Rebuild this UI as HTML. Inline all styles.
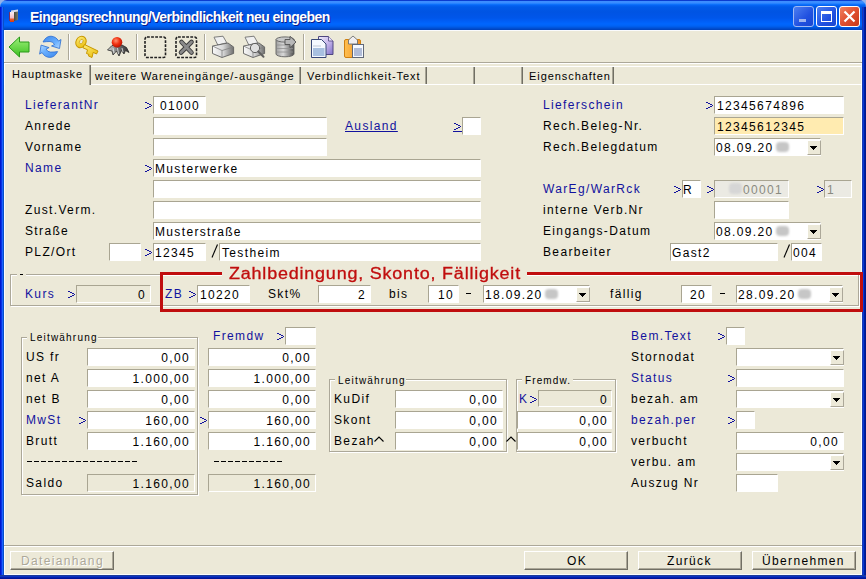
<!DOCTYPE html><html><head><meta charset="utf-8"><style>
*{margin:0;padding:0}
html,body{width:866px;height:579px;overflow:hidden}
body{position:relative;background:#94B2EA;font-family:"Liberation Sans",sans-serif}
.a{position:absolute}
.t{position:absolute;font-size:12px;line-height:14px;letter-spacing:1.35px;white-space:nowrap;color:#000}
.b{color:#12129E}
.u{text-decoration:underline}
.g{color:#8A8A80}
.in{position:absolute;background:#fff;border-top:1px solid #A9A592;border-left:1px solid #A9A592;border-right:1px solid #fff;border-bottom:1px solid #fff;box-sizing:border-box}
.dd{position:absolute;background:#ECE9D8;box-sizing:border-box;border-top:1px solid #fff;border-left:1px solid #fff;border-right:1px solid #ACA899;border-bottom:1px solid #ACA899}
.dd i{position:absolute;left:2px;top:5px;width:0;height:0;border-left:3.5px solid transparent;border-right:3.5px solid transparent;border-top:4px solid #000}
.blur{position:absolute;background:#C6C6C6;border-radius:4px;filter:blur(0.9px)}
.gb{position:absolute;box-sizing:border-box;border:1px solid #ACA899;box-shadow:1px 1px 0 #fff, inset 1px 1px 0 #fff}
.btn{position:absolute;box-sizing:border-box;background:#ECE9D8;border-top:1px solid #fff;border-left:1px solid #fff;border-right:1px solid #716F64;border-bottom:1px solid #716F64;box-shadow:inset -1px -1px 0 #ACA899}
.tab{position:absolute;font-size:11px;line-height:14px;letter-spacing:0.93px;white-space:nowrap;color:#000}
</style></head><body>
<div class="a" style="left:0;top:0;width:866px;height:30px;border-radius:7px 7px 0 0;background:linear-gradient(to bottom,#0A3CD0 0px,#0A3CD0 1px,#3D8EFF 1px,#3A8CFF 3px,#147AFF 4px,#0566F6 5px,#005AE8 7px,#0054E3 12px,#0056EA 18px,#005EF6 21px,#0066FE 24px,#0062F4 26px,#0052D8 28px,#0040B8 30px)"></div>
<div class="a" style="left:0;top:7px;width:4px;height:572px;background:linear-gradient(to right,#0018D0 0px,#0018D0 1px,#0A34E4 1px,#0A34E4 2px,#1A62FF 2px,#1A62FF 3px,#0850C8 3px)"></div>
<div class="a" style="left:862px;top:7px;width:4px;height:572px;background:linear-gradient(to right,#1A3AB0 0px,#1A3AB0 1px,#0838D8 1px,#0838D8 2px,#0020A0 2px,#0020A0 3px,#001890 3px)"></div>
<div class="a" style="left:0;top:575px;width:866px;height:4px;background:linear-gradient(to bottom,#1C3C98 0px,#1C3C98 1px,#0B34C4 1px,#0B34C4 2px,#0420A8 2px,#0420A8 3px,#00149A 3px)"></div>
<div class="a" style="left:4px;top:30px;width:858px;height:545px;background:#ECE9D8;box-sizing:border-box;border:1px solid #FAFBFD"></div>
<div class="a" style="left:9px;top:12px;width:1px;height:9px;background:#7a3060"></div>
<div class="a" style="left:10px;top:12px;width:4px;height:10px;background:linear-gradient(to bottom,#fff0f4,#f4c0c8 55%,#e85828 75%,#d83810)"></div>
<div class="a" style="left:14px;top:11px;width:4px;height:10px;background:linear-gradient(to right,#4a4a3a,#7a7a68);transform:skewY(-14deg);transform-origin:0 0"></div>
<div class="a" style="left:11px;top:10px;width:7px;height:2px;background:#d8dce8;transform:skewY(-10deg)"></div>
<div class="a" style="left:30px;top:9px;font-size:14px;line-height:16px;font-weight:bold;letter-spacing:-0.55px;color:#fff;white-space:nowrap;text-shadow:1px 1px 0 #0a1e8a">Eingangsrechnung/Verbindlichkeit neu eingeben</div>
<div class="a" style="left:793px;top:6px;width:21px;height:21px;box-sizing:border-box;border:1px solid #9fb9f4;border-radius:3px;background:linear-gradient(135deg,#4d7ff0,#2050e0 60%,#1a46d0)"><div class="a" style="left:5px;top:12px;width:7px;height:3px;background:#9eb4ee"></div></div>
<div class="a" style="left:816px;top:6px;width:21px;height:21px;box-sizing:border-box;border:1px solid #fff;border-radius:3px;background:linear-gradient(135deg,#4d7ff0,#2050e0 60%,#1a46d0)"><div class="a" style="left:4px;top:4px;width:11px;height:11px;box-sizing:border-box;border:1px solid #fff;border-top-width:3px"></div></div>
<div class="a" style="left:839px;top:6px;width:21px;height:21px;box-sizing:border-box;border:1px solid #fff;border-radius:3px;background:linear-gradient(135deg,#f08060,#e05030 50%,#c83818)"><svg class="a" style="left:0;top:0" width="19" height="19"><path d="M4.5 4.5L14.5 14.5M14.5 4.5L4.5 14.5" stroke="#fff" stroke-width="2.2"/></svg></div>
<svg class="a" style="left:0;top:0" width="400" height="62">
<defs>
<linearGradient id="gg" x1="0" y1="0" x2="0" y2="1"><stop offset="0" stop-color="#9ef07a"/><stop offset="1" stop-color="#3cc020"/></linearGradient>
<linearGradient id="bg1" x1="0" y1="0" x2="1" y2="1"><stop offset="0" stop-color="#2f7fe8"/><stop offset="1" stop-color="#a8d4ff"/></linearGradient>
<linearGradient id="yg" x1="0" y1="0" x2="1" y2="1"><stop offset="0" stop-color="#fff080"/><stop offset="1" stop-color="#e8b800"/></linearGradient>
<radialGradient id="rg" cx="0.4" cy="0.35" r="0.7"><stop offset="0" stop-color="#ff9070"/><stop offset="0.5" stop-color="#f03010"/><stop offset="1" stop-color="#b01000"/></radialGradient>
<linearGradient id="pg" x1="0" y1="0" x2="1" y2="0"><stop offset="0" stop-color="#f8f8f8"/><stop offset="0.5" stop-color="#d8d8d8"/><stop offset="1" stop-color="#707070"/></linearGradient>
<linearGradient id="dbg" x1="0" y1="0" x2="1" y2="0"><stop offset="0" stop-color="#a0a0a0"/><stop offset="0.4" stop-color="#d8d8d8"/><stop offset="1" stop-color="#505050"/></linearGradient>
<linearGradient id="og" x1="0" y1="0" x2="1" y2="0"><stop offset="0" stop-color="#ffc050"/><stop offset="1" stop-color="#f09020"/></linearGradient>
</defs>
<!-- green back arrow -->
<path d="M9 47 L19.5 37 L19.5 42 L29 42 L29 52 L19.5 52 L19.5 57 Z" fill="url(#gg)" stroke="#2a9a1a" stroke-width="1"/>
<!-- refresh -->
<linearGradient id="rf1" x1="0" y1="0" x2="1" y2="1"><stop offset="0" stop-color="#3A86EC"/><stop offset="0.6" stop-color="#6AB0FF"/><stop offset="1" stop-color="#B8DCFF"/></linearGradient>
<linearGradient id="rf2" x1="1" y1="1" x2="0" y2="0"><stop offset="0" stop-color="#3A86EC"/><stop offset="0.6" stop-color="#6AB0FF"/><stop offset="1" stop-color="#B8DCFF"/></linearGradient>
<path d="M43 42 Q46 36 51 36.2 Q56 36.5 58.5 41 L61 39.5 L59.5 48.5 L51.5 46 L54.5 44.5 Q53 41.5 50 41.5 Q46.5 41.5 43 42 Z" fill="url(#rf1)" stroke="#2A6CD0" stroke-width="0.8" stroke-linejoin="round"/>
<path d="M57.6 51.6 Q54.6 57.6 49.6 57.4 Q44.6 57.1 42.1 52.6 L39.6 54.1 L41.1 45.1 L49.1 47.6 L46.1 49.1 Q47.6 52.1 50.6 52.1 Q54.1 52.1 57.6 51.6 Z" fill="url(#rf2)" stroke="#2A6CD0" stroke-width="0.8" stroke-linejoin="round"/>
<!-- separator -->
<rect x="68" y="34" width="1" height="26" fill="#ACA899"/><rect x="69" y="34" width="1" height="26" fill="#fff"/>
<!-- key -->
<g transform="rotate(28 81 42)">
<ellipse cx="81" cy="42" rx="5" ry="6" fill="url(#yg)" stroke="#c89800" stroke-width="1"/>
<ellipse cx="81" cy="41.5" rx="1.6" ry="2.4" fill="#ECE9D8" stroke="#c89800" stroke-width="0.6"/>
</g>
<path d="M84.5 44.5 L98 51 L96.5 54 L93.2 52.4 L92 57.5 L88.5 56 L89 54.5 L86.5 53.5 L87.5 49.8 L83 47.8 Z" fill="url(#yg)" stroke="#c89800" stroke-width="1"/>
<!-- bomb/spider -->
<linearGradient id="spg" x1="0" y1="0" x2="1" y2="0"><stop offset="0" stop-color="#d0d4d4"/><stop offset="0.5" stop-color="#707070"/><stop offset="1" stop-color="#303030"/></linearGradient>
<path d="M107.5 50 L112 45.5 L122 45 L126.5 47.5 L129 52.5 L125.5 50.5 L124 54 L121.5 50.5 L119 56 L116.5 51 L113 55 L112 51 Z" fill="url(#spg)" stroke="#2a2a2a" stroke-width="0.8" stroke-linejoin="round"/>
<path d="M113 48 L114 53 M117.5 48 L118.5 54 M122 48 L123 52" stroke="#e8ecec" stroke-width="0.8"/>
<circle cx="117" cy="42.3" r="5.3" fill="url(#rg)"/>
<!-- separator -->
<rect x="136" y="34" width="1" height="26" fill="#ACA899"/><rect x="137" y="34" width="1" height="26" fill="#fff"/>
<!-- dashed boxes -->
<rect x="145" y="37" width="20.5" height="20.5" rx="2" fill="none" stroke="#202020" stroke-width="1.6" stroke-dasharray="2.8 1.3"/>
<rect x="176" y="37" width="20.5" height="20.5" rx="2" fill="none" stroke="#202020" stroke-width="1.6" stroke-dasharray="2.8 1.3"/>
<path d="M181.5 42 L191.5 52.5 M191.5 42 L181 52.5" stroke="#3a3a3a" stroke-width="4.6" stroke-linecap="round"/><path d="M181.5 42 L191.5 52.5 M191.5 42 L181 52.5" stroke="#8a8a8a" stroke-width="2.8" stroke-linecap="round"/>
<!-- separator -->
<rect x="204" y="34" width="1" height="26" fill="#ACA899"/><rect x="205" y="34" width="1" height="26" fill="#fff"/>
<!-- printer -->
<g id="pr">
<path d="M214 37.2 L223 36.2 L226.8 42.8 L217.8 45 Z" fill="#f0f0f0" stroke="#707070" stroke-width="0.9"/>
<path d="M212.5 46 L228 43 L233.6 47 L233.6 53.5 L222 57.5 L212.5 53.5 Z" fill="url(#pg)" stroke="#606060" stroke-width="0.9"/>
<path d="M212.5 46 L222 50.5 L233.6 47 M222 50.5 L222 57.5" fill="none" stroke="#808080" stroke-width="0.8"/>
</g>
<use href="#pr" x="31"/>
<circle cx="255" cy="48" r="4.6" fill="#e0e0e0" stroke="#606060" stroke-width="1"/>
<path d="M258.3 51.5 L263.5 56.8" stroke="#606060" stroke-width="2" stroke-linecap="round"/>
<!-- database -->
<path d="M276 39.5 L276 54 A9 2.8 0 0 0 294 54 L294 39.5 Z" fill="url(#dbg)" stroke="#606060" stroke-width="0.9"/>
<ellipse cx="285" cy="39.5" rx="9" ry="2.6" fill="#c8c8c8" stroke="#606060" stroke-width="0.9"/>
<g stroke="#909090" stroke-width="0.8"><path d="M277 45 L293 45 M277 48.5 L293 48.5 M277 52 L293 52"/></g>
<path d="M285 39.5 L290 39.5 L290 36.3 L296 42 L290 47.7 L290 44.5 L285 44.5 Z" fill="#b8b8b8" stroke="#505050" stroke-width="0.9"/>
<!-- separator -->
<rect x="303" y="34" width="1" height="26" fill="#ACA899"/><rect x="304" y="34" width="1" height="26" fill="#fff"/>
<!-- copy -->
<linearGradient id="cpg" x1="0" y1="0" x2="1" y2="1"><stop offset="0" stop-color="#f0eefa"/><stop offset="0.5" stop-color="#c8b8ec"/><stop offset="1" stop-color="#8070c8"/></linearGradient><path d="M318.5 36.5 L328.5 36.5 L333 41 L333 54.5 L318.5 54.5 Z" fill="url(#cpg)" stroke="#504880" stroke-width="1"/>
<path d="M328.5 36.5 L328.5 41 L333 41" fill="#e8e0f8" stroke="#504880" stroke-width="0.8"/>
<path d="M311.5 39.5 L321.5 39.5 L326 44 L326 57.5 L311.5 57.5 Z" fill="#f4f8ff" stroke="#384878" stroke-width="1"/>
<rect x="313" y="48" width="11.5" height="8" fill="#a8c0e0"/>
<rect x="313" y="45.5" width="8" height="1" fill="#c0c8d8"/>
<!-- paste -->
<rect x="344.5" y="39.5" width="16" height="18" rx="1.5" fill="url(#og)" stroke="#d08010" stroke-width="1"/>
<path d="M348.5 44 L348.5 40 L353 36 L357.5 40 L357.5 44 Z" fill="#f0eef0" stroke="#707070" stroke-width="0.9"/>
<rect x="352.5" y="44.5" width="11" height="13" fill="#f4f8ff" stroke="#606878" stroke-width="1"/>
<rect x="354" y="48" width="8" height="8" fill="#b0bcd8"/>
</svg>

<div class="a" style="left:4px;top:62px;width:858px;height:1px;background:#ACA899"></div>
<div class="a" style="left:4px;top:63px;width:858px;height:1px;background:#fff"></div>
<div class="a" style="left:90px;top:66px;width:772px;height:1px;background:#fff"></div>
<div class="a" style="left:90px;top:84px;width:772px;height:1px;background:#fff"></div>
<div class="a" style="left:4px;top:64px;width:1px;height:21px;background:#fff"></div>
<div class="a" style="left:89px;top:65px;width:1px;height:20px;background:#A8A596"></div>
<div class="a" style="left:90px;top:65px;width:1px;height:20px;background:#716F64"></div>
<div class="a" style="left:299px;top:67px;width:1px;height:17px;background:#A8A596"></div>
<div class="a" style="left:300px;top:67px;width:1px;height:17px;background:#716F64"></div>
<div class="a" style="left:425px;top:67px;width:1px;height:17px;background:#A8A596"></div>
<div class="a" style="left:426px;top:67px;width:1px;height:17px;background:#716F64"></div>
<div class="a" style="left:473px;top:67px;width:1px;height:17px;background:#A8A596"></div>
<div class="a" style="left:474px;top:67px;width:1px;height:17px;background:#716F64"></div>
<div class="a" style="left:521px;top:67px;width:1px;height:17px;background:#A8A596"></div>
<div class="a" style="left:522px;top:67px;width:1px;height:17px;background:#716F64"></div>
<div class="a" style="left:612px;top:67px;width:1px;height:17px;background:#A8A596"></div>
<div class="a" style="left:613px;top:67px;width:1px;height:17px;background:#716F64"></div>
<div class="tab" style="left:12px;top:67px">Hauptmaske</div>
<div class="tab" style="left:95px;top:69px">weitere Wareneingänge/-ausgänge</div>
<div class="tab" style="left:307px;top:69px">Verbindlichkeit-Text</div>
<div class="tab" style="left:529px;top:69px">Eigenschaften</div>
<div class="t b" style="left:25px;top:98px;">LieferantNr</div>
<div class="t" style="left:25px;top:119px;">Anrede</div>
<div class="t" style="left:25px;top:140px;">Vorname</div>
<div class="t b" style="left:25px;top:161px;">Name</div>
<div class="t" style="left:25px;top:203px;">Zust.Verm.</div>
<div class="t" style="left:25px;top:224px;">Straße</div>
<div class="t" style="left:25px;top:245px;">PLZ/Ort</div>
<svg class="a" style="left:145px;top:102px" width="7" height="7" shape-rendering="crispEdges"><path d="M0 0h2v1h-2zM2 1h2v1h-2zM4 2h2v1h-2zM6 3h1v1h-1zM4 4h2v1h-2zM2 5h2v1h-2zM0 6h2v1h-2z" fill="#12129E"/></svg>
<svg class="a" style="left:145px;top:165px" width="7" height="7" shape-rendering="crispEdges"><path d="M0 0h2v1h-2zM2 1h2v1h-2zM4 2h2v1h-2zM6 3h1v1h-1zM4 4h2v1h-2zM2 5h2v1h-2zM0 6h2v1h-2z" fill="#12129E"/></svg>
<svg class="a" style="left:145px;top:249px" width="7" height="7" shape-rendering="crispEdges"><path d="M0 0h2v1h-2zM2 1h2v1h-2zM4 2h2v1h-2zM6 3h1v1h-1zM4 4h2v1h-2zM2 5h2v1h-2zM0 6h2v1h-2z" fill="#12129E"/></svg>
<div class="in" style="left:153px;top:96px;width:53px;height:18px;"></div>
<div class="t" style="left:160px;top:99px;">01000</div>
<div class="in" style="left:153px;top:117px;width:174px;height:18px;"></div>
<div class="in" style="left:153px;top:138px;width:174px;height:18px;"></div>
<div class="in" style="left:153px;top:159px;width:328px;height:18px;"></div>
<div class="in" style="left:153px;top:180px;width:328px;height:18px;"></div>
<div class="in" style="left:153px;top:201px;width:328px;height:18px;"></div>
<div class="in" style="left:153px;top:222px;width:328px;height:18px;"></div>
<div class="t" style="left:155px;top:162px;">Musterwerke</div>
<div class="t" style="left:155px;top:225px;">Musterstraße</div>
<div class="in" style="left:109px;top:243px;width:32px;height:18px;"></div>
<div class="in" style="left:153px;top:243px;width:53px;height:18px;"></div>
<div class="t" style="left:155px;top:246px;">12345</div>
<svg class="a" style="left:211px;top:244px" width="8" height="14"><path d="M1 13.5 L6.5 0.5" stroke="#000" stroke-width="1.1"/></svg>
<div class="in" style="left:219px;top:243px;width:262px;height:18px;"></div>
<div class="t" style="left:222px;top:246px;">Testheim</div>
<div class="t b u" style="left:345px;top:119px;">Ausland</div>
<svg class="a" style="left:454px;top:123px" width="7" height="7" shape-rendering="crispEdges"><path d="M0 0h2v1h-2zM2 1h2v1h-2zM4 2h2v1h-2zM6 3h1v1h-1zM4 4h2v1h-2zM2 5h2v1h-2zM0 6h2v1h-2z" fill="#12129E"/></svg>
<div class="a" style="left:453px;top:131px;width:9px;height:1px;background:#12129E"></div>
<div class="in" style="left:462px;top:117px;width:19px;height:18px;"></div>
<div class="t b" style="left:543px;top:98px;">Lieferschein</div>
<div class="t" style="left:543px;top:119px;">Rech.Beleg-Nr.</div>
<div class="t" style="left:543px;top:140px;">Rech.Belegdatum</div>
<div class="t b" style="left:543px;top:182px;">WarEg/WarRck</div>
<div class="t" style="left:543px;top:203px;">interne Verb.Nr</div>
<div class="t" style="left:543px;top:224px;">Eingangs-Datum</div>
<div class="t" style="left:543px;top:245px;">Bearbeiter</div>
<svg class="a" style="left:706px;top:102px" width="7" height="7" shape-rendering="crispEdges"><path d="M0 0h2v1h-2zM2 1h2v1h-2zM4 2h2v1h-2zM6 3h1v1h-1zM4 4h2v1h-2zM2 5h2v1h-2zM0 6h2v1h-2z" fill="#12129E"/></svg>
<div class="in" style="left:714px;top:96px;width:130px;height:18px;"></div>
<div class="t" style="left:717px;top:99px;">12345674896</div>
<div class="in" style="left:714px;top:117px;width:130px;height:18px;background:#FFEBB0;"></div>
<div class="t" style="left:717px;top:120px;">12345612345</div>
<div class="in" style="left:714px;top:138px;width:107px;height:18px;"></div>
<div class="dd" style="left:807px;top:140px;width:14px;height:15px"><svg style="position:absolute;left:2px;top:5px" width="7" height="4" shape-rendering="crispEdges"><path d="M0 0h7v1h-7zM1 1h5v1h-5zM2 2h3v1h-3zM3 3h1v1h-1z" fill="#000"/></svg></div>
<div class="t" style="left:716px;top:141px;">08.09.20</div>
<div class="blur" style="left:776px;top:142px;width:13px;height:10px;"></div>
<svg class="a" style="left:674px;top:186px" width="7" height="7" shape-rendering="crispEdges"><path d="M0 0h2v1h-2zM2 1h2v1h-2zM4 2h2v1h-2zM6 3h1v1h-1zM4 4h2v1h-2zM2 5h2v1h-2zM0 6h2v1h-2z" fill="#12129E"/></svg>
<div class="in" style="left:682px;top:180px;width:19px;height:18px;"></div>
<div class="t" style="left:683px;top:183px;">R</div>
<svg class="a" style="left:707px;top:186px" width="7" height="7" shape-rendering="crispEdges"><path d="M0 0h2v1h-2zM2 1h2v1h-2zM4 2h2v1h-2zM6 3h1v1h-1zM4 4h2v1h-2zM2 5h2v1h-2zM0 6h2v1h-2z" fill="#12129E"/></svg>
<div class="in" style="left:714px;top:180px;width:75px;height:18px;background:#EBEAE3;"></div>
<div class="blur" style="left:729px;top:183px;width:13px;height:11px;background:#D6D6D6;"></div>
<div class="t g" style="left:743px;top:183px;">00001</div>
<svg class="a" style="left:817px;top:186px" width="7" height="7" shape-rendering="crispEdges"><path d="M0 0h2v1h-2zM2 1h2v1h-2zM4 2h2v1h-2zM6 3h1v1h-1zM4 4h2v1h-2zM2 5h2v1h-2zM0 6h2v1h-2z" fill="#12129E"/></svg>
<div class="in" style="left:824px;top:180px;width:28px;height:18px;background:#EBEAE3;"></div>
<div class="t g" style="left:827px;top:183px;">1</div>
<div class="in" style="left:714px;top:201px;width:75px;height:18px;"></div>
<div class="in" style="left:714px;top:222px;width:107px;height:18px;"></div>
<div class="dd" style="left:807px;top:224px;width:14px;height:15px"><svg style="position:absolute;left:2px;top:5px" width="7" height="4" shape-rendering="crispEdges"><path d="M0 0h7v1h-7zM1 1h5v1h-5zM2 2h3v1h-3zM3 3h1v1h-1z" fill="#000"/></svg></div>
<div class="t" style="left:716px;top:225px;">08.09.20</div>
<div class="blur" style="left:776px;top:226px;width:13px;height:10px;"></div>
<div class="in" style="left:670px;top:243px;width:108px;height:18px;"></div>
<div class="t" style="left:672px;top:246px;">Gast2</div>
<svg class="a" style="left:783px;top:244px" width="8" height="14"><path d="M1 13.5 L6.5 0.5" stroke="#000" stroke-width="1.1"/></svg>
<div class="in" style="left:791px;top:243px;width:31px;height:18px;"></div>
<div class="t" style="left:793px;top:246px;">004</div>
<div class="gb" style="left:10px;top:274px;width:849px;height:32px"></div>
<div class="a" style="left:17px;top:274px;width:9px;height:2px;background:#ECE9D8"></div>
<div class="a" style="left:20px;top:274px;width:3px;height:1px;background:#000"></div>
<div class="t b" style="left:25px;top:287px;">Kurs</div>
<svg class="a" style="left:68px;top:291px" width="7" height="7" shape-rendering="crispEdges"><path d="M0 0h2v1h-2zM2 1h2v1h-2zM4 2h2v1h-2zM6 3h1v1h-1zM4 4h2v1h-2zM2 5h2v1h-2zM0 6h2v1h-2z" fill="#12129E"/></svg>
<div class="in" style="left:76px;top:285px;width:75px;height:18px;background:#ECE9D8;"></div>
<div class="t tr" style="right:720px;top:288px;">0</div>
<div class="t b" style="left:165px;top:287px;">ZB</div>
<svg class="a" style="left:189px;top:291px" width="7" height="7" shape-rendering="crispEdges"><path d="M0 0h2v1h-2zM2 1h2v1h-2zM4 2h2v1h-2zM6 3h1v1h-1zM4 4h2v1h-2zM2 5h2v1h-2zM0 6h2v1h-2z" fill="#12129E"/></svg>
<div class="in" style="left:197px;top:285px;width:53px;height:18px;"></div>
<div class="t" style="left:200px;top:288px;">10220</div>
<div class="t" style="left:268px;top:287px;">Skt%</div>
<div class="in" style="left:318px;top:285px;width:53px;height:18px;"></div>
<div class="t tr" style="right:500px;top:288px;">2</div>
<div class="t" style="left:389px;top:287px;">bis</div>
<div class="in" style="left:428px;top:285px;width:31px;height:18px;"></div>
<div class="t" style="left:438px;top:288px;">10</div>
<div class="a" style="left:466px;top:293px;width:5px;height:1px;background:#000"></div>
<div class="in" style="left:483px;top:285px;width:107px;height:18px;"></div>
<div class="dd" style="left:576px;top:287px;width:14px;height:15px"><svg style="position:absolute;left:2px;top:5px" width="7" height="4" shape-rendering="crispEdges"><path d="M0 0h7v1h-7zM1 1h5v1h-5zM2 2h3v1h-3zM3 3h1v1h-1z" fill="#000"/></svg></div>
<div class="t" style="left:485px;top:288px;">18.09.20</div>
<div class="blur" style="left:545px;top:289px;width:13px;height:10px;"></div>
<div class="t" style="left:610px;top:287px;">fällig</div>
<div class="in" style="left:681px;top:285px;width:31px;height:18px;"></div>
<div class="t" style="left:690px;top:288px;">20</div>
<div class="a" style="left:720px;top:293px;width:5px;height:1px;background:#000"></div>
<div class="in" style="left:736px;top:285px;width:107px;height:18px;"></div>
<div class="dd" style="left:829px;top:287px;width:14px;height:15px"><svg style="position:absolute;left:2px;top:5px" width="7" height="4" shape-rendering="crispEdges"><path d="M0 0h7v1h-7zM1 1h5v1h-5zM2 2h3v1h-3zM3 3h1v1h-1z" fill="#000"/></svg></div>
<div class="t" style="left:738px;top:288px;">28.09.20</div>
<div class="blur" style="left:798px;top:289px;width:13px;height:10px;"></div>
<div class="a" style="left:160px;top:272px;width:703px;height:3px;background:#C00E0E"></div>
<div class="a" style="left:160px;top:309px;width:703px;height:3px;background:#C00E0E"></div>
<div class="a" style="left:160px;top:272px;width:3px;height:40px;background:#C00E0E"></div>
<div class="a" style="left:860px;top:272px;width:3px;height:40px;background:#C00E0E"></div>
<div class="a" style="left:222px;top:268px;width:305px;height:10px;background:#ECE9D8"></div>
<div class="a" style="left:229px;top:265px;font-size:16px;line-height:18px;letter-spacing:0.73px;color:#C00E0E;white-space:nowrap;-webkit-text-stroke:0.3px #C00E0E;transform:scaleX(1.12);transform-origin:0 0">Zahlbedingung, Skonto, Fälligkeit</div>
<div class="gb" style="left:21px;top:337px;width:177px;height:158px"></div>
<div class="a" style="left:27px;top:337px;width:71px;height:2px;background:#ECE9D8"></div>
<div class="t" style="left:30px;top:331px;font-size:10px;letter-spacing:1.2px;">Leitwährung</div>
<div class="t" style="left:26px;top:350px;">US fr</div>
<div class="t" style="left:26px;top:371px;">net A</div>
<div class="t" style="left:26px;top:392px;">net B</div>
<div class="t b" style="left:26px;top:413px;">MwSt</div>
<svg class="a" style="left:79px;top:417px" width="7" height="7" shape-rendering="crispEdges"><path d="M0 0h2v1h-2zM2 1h2v1h-2zM4 2h2v1h-2zM6 3h1v1h-1zM4 4h2v1h-2zM2 5h2v1h-2zM0 6h2v1h-2z" fill="#12129E"/></svg>
<div class="t" style="left:26px;top:434px;">Brutt</div>
<div class="t" style="left:26px;top:476px;">Saldo</div>
<div class="in" style="left:87px;top:348px;width:108px;height:18px;"></div>
<div class="t tr" style="right:676px;top:351px;">0,00</div>
<div class="in" style="left:208px;top:348px;width:108px;height:18px;"></div>
<div class="t tr" style="right:555px;top:351px;">0,00</div>
<div class="in" style="left:87px;top:369px;width:108px;height:18px;"></div>
<div class="t tr" style="right:676px;top:372px;">1.000,00</div>
<div class="in" style="left:208px;top:369px;width:108px;height:18px;"></div>
<div class="t tr" style="right:555px;top:372px;">1.000,00</div>
<div class="in" style="left:87px;top:390px;width:108px;height:18px;"></div>
<div class="t tr" style="right:676px;top:393px;">0,00</div>
<div class="in" style="left:208px;top:390px;width:108px;height:18px;"></div>
<div class="t tr" style="right:555px;top:393px;">0,00</div>
<div class="in" style="left:87px;top:411px;width:108px;height:18px;"></div>
<div class="t tr" style="right:676px;top:414px;">160,00</div>
<div class="in" style="left:208px;top:411px;width:108px;height:18px;"></div>
<div class="t tr" style="right:555px;top:414px;">160,00</div>
<div class="in" style="left:87px;top:432px;width:108px;height:18px;"></div>
<div class="t tr" style="right:676px;top:435px;">1.160,00</div>
<div class="in" style="left:208px;top:432px;width:108px;height:18px;"></div>
<div class="t tr" style="right:555px;top:435px;">1.160,00</div>
<div class="in" style="left:87px;top:474px;width:108px;height:18px;background:#ECE9D8;"></div>
<div class="t tr" style="right:676px;top:477px;">1.160,00</div>
<div class="in" style="left:208px;top:474px;width:108px;height:18px;background:#ECE9D8;"></div>
<div class="t tr" style="right:555px;top:477px;">1.160,00</div>
<div class="a" style="left:27px;top:461px;width:110px;height:1px;background:repeating-linear-gradient(to right,#000 0,#000 5px,transparent 5px,transparent 7px)"></div>
<div class="a" style="left:214px;top:461px;width:68px;height:1px;background:repeating-linear-gradient(to right,#000 0,#000 5px,transparent 5px,transparent 7px)"></div>
<div class="t b" style="left:213px;top:329px;">Fremdw</div>
<svg class="a" style="left:277px;top:333px" width="7" height="7" shape-rendering="crispEdges"><path d="M0 0h2v1h-2zM2 1h2v1h-2zM4 2h2v1h-2zM6 3h1v1h-1zM4 4h2v1h-2zM2 5h2v1h-2zM0 6h2v1h-2z" fill="#12129E"/></svg>
<div class="in" style="left:285px;top:327px;width:31px;height:18px;"></div>
<svg class="a" style="left:200px;top:417px" width="7" height="7" shape-rendering="crispEdges"><path d="M0 0h2v1h-2zM2 1h2v1h-2zM4 2h2v1h-2zM6 3h1v1h-1zM4 4h2v1h-2zM2 5h2v1h-2zM0 6h2v1h-2z" fill="#12129E"/></svg>
<div class="gb" style="left:329px;top:379px;width:178px;height:73px"></div>
<div class="a" style="left:335px;top:379px;width:71px;height:2px;background:#ECE9D8"></div>
<div class="t" style="left:338px;top:374px;font-size:10px;letter-spacing:1.2px;">Leitwährung</div>
<div class="gb" style="left:516px;top:379px;width:100px;height:73px"></div>
<div class="a" style="left:522px;top:379px;width:51px;height:2px;background:#ECE9D8"></div>
<div class="t" style="left:525px;top:374px;font-size:10px;letter-spacing:1.1px;">Fremdw.</div>
<div class="t" style="left:334px;top:392px;">KuDif</div>
<div class="t" style="left:334px;top:413px;">Skont</div>
<div class="t" style="left:334px;top:434px;">Bezah</div>
<svg class="a" style="left:374px;top:436px" width="11" height="6"><path d="M0.5 5.5 L5 1 L9.5 5.5" fill="none" stroke="#000" stroke-width="1.1"/></svg>
<div class="in" style="left:395px;top:390px;width:108px;height:18px;"></div>
<div class="t tr" style="right:368px;top:393px;">0,00</div>
<div class="in" style="left:395px;top:411px;width:108px;height:18px;"></div>
<div class="t tr" style="right:368px;top:414px;">0,00</div>
<div class="in" style="left:395px;top:432px;width:108px;height:18px;"></div>
<div class="t tr" style="right:368px;top:435px;">0,00</div>
<svg class="a" style="left:506px;top:436px" width="11" height="6"><path d="M0.5 5.5 L5 1 L9.5 5.5" fill="none" stroke="#000" stroke-width="1.1"/></svg>
<div class="t b" style="left:519px;top:392px;letter-spacing:0px;">K</div>
<svg class="a" style="left:530px;top:396px" width="7" height="7" shape-rendering="crispEdges"><path d="M0 0h2v1h-2zM2 1h2v1h-2zM4 2h2v1h-2zM6 3h1v1h-1zM4 4h2v1h-2zM2 5h2v1h-2zM0 6h2v1h-2z" fill="#12129E"/></svg>
<div class="in" style="left:538px;top:390px;width:74px;height:17px;background:#ECE9D8;"></div>
<div class="t tr" style="right:258px;top:393px;">0</div>
<div class="in" style="left:517px;top:411px;width:95px;height:18px;"></div>
<div class="t tr" style="right:258px;top:414px;">0,00</div>
<div class="in" style="left:517px;top:432px;width:95px;height:18px;"></div>
<div class="t tr" style="right:258px;top:435px;">0,00</div>
<div class="t b" style="left:631px;top:329px;">Bem.Text</div>
<svg class="a" style="left:718px;top:333px" width="7" height="7" shape-rendering="crispEdges"><path d="M0 0h2v1h-2zM2 1h2v1h-2zM4 2h2v1h-2zM6 3h1v1h-1zM4 4h2v1h-2zM2 5h2v1h-2zM0 6h2v1h-2z" fill="#12129E"/></svg>
<div class="in" style="left:726px;top:327px;width:19px;height:18px;"></div>
<div class="t" style="left:631px;top:350px;">Stornodat</div>
<div class="in" style="left:736px;top:348px;width:108px;height:18px;"></div>
<div class="dd" style="left:830px;top:350px;width:14px;height:15px"><svg style="position:absolute;left:2px;top:5px" width="7" height="4" shape-rendering="crispEdges"><path d="M0 0h7v1h-7zM1 1h5v1h-5zM2 2h3v1h-3zM3 3h1v1h-1z" fill="#000"/></svg></div>
<div class="t b" style="left:631px;top:371px;">Status</div>
<svg class="a" style="left:728px;top:375px" width="7" height="7" shape-rendering="crispEdges"><path d="M0 0h2v1h-2zM2 1h2v1h-2zM4 2h2v1h-2zM6 3h1v1h-1zM4 4h2v1h-2zM2 5h2v1h-2zM0 6h2v1h-2z" fill="#12129E"/></svg>
<div class="in" style="left:736px;top:369px;width:108px;height:18px;"></div>
<div class="t" style="left:631px;top:392px;">bezah. am</div>
<div class="in" style="left:736px;top:390px;width:108px;height:18px;"></div>
<div class="dd" style="left:830px;top:392px;width:14px;height:15px"><svg style="position:absolute;left:2px;top:5px" width="7" height="4" shape-rendering="crispEdges"><path d="M0 0h7v1h-7zM1 1h5v1h-5zM2 2h3v1h-3zM3 3h1v1h-1z" fill="#000"/></svg></div>
<div class="t b" style="left:631px;top:413px;">bezah.per</div>
<svg class="a" style="left:728px;top:417px" width="7" height="7" shape-rendering="crispEdges"><path d="M0 0h2v1h-2zM2 1h2v1h-2zM4 2h2v1h-2zM6 3h1v1h-1zM4 4h2v1h-2zM2 5h2v1h-2zM0 6h2v1h-2z" fill="#12129E"/></svg>
<div class="in" style="left:736px;top:411px;width:19px;height:18px;"></div>
<div class="t" style="left:631px;top:434px;">verbucht</div>
<div class="in" style="left:736px;top:432px;width:108px;height:18px;"></div>
<div class="t tr" style="right:27px;top:435px;">0,00</div>
<div class="t" style="left:631px;top:455px;">verbu. am</div>
<div class="in" style="left:736px;top:453px;width:108px;height:18px;"></div>
<div class="dd" style="left:830px;top:455px;width:14px;height:15px"><svg style="position:absolute;left:2px;top:5px" width="7" height="4" shape-rendering="crispEdges"><path d="M0 0h7v1h-7zM1 1h5v1h-5zM2 2h3v1h-3zM3 3h1v1h-1z" fill="#000"/></svg></div>
<div class="t" style="left:631px;top:476px;">Auszug Nr</div>
<div class="in" style="left:736px;top:474px;width:42px;height:18px;"></div>
<div class="a" style="left:4px;top:545px;width:858px;height:1px;background:#ACA899"></div>
<div class="a" style="left:4px;top:546px;width:858px;height:1px;background:#fff"></div>
<div class="btn" style="left:10px;top:551px;width:104px;height:19px"></div>
<div class="t" style="left:22px;top:555px;color:#fff;">Dateianhang</div>
<div class="t" style="left:21px;top:554px;color:#ACA899;">Dateianhang</div>
<div class="btn" style="left:524px;top:551px;width:104px;height:19px"></div>
<div class="t" style="left:567px;top:554px;">OK</div>
<div class="btn" style="left:638px;top:551px;width:104px;height:19px"></div>
<div class="t" style="left:667px;top:554px;">Zurück</div>
<div class="btn" style="left:752px;top:551px;width:104px;height:19px"></div>
<div class="t" style="left:762px;top:554px;">Übernehmen</div>
</body></html>
